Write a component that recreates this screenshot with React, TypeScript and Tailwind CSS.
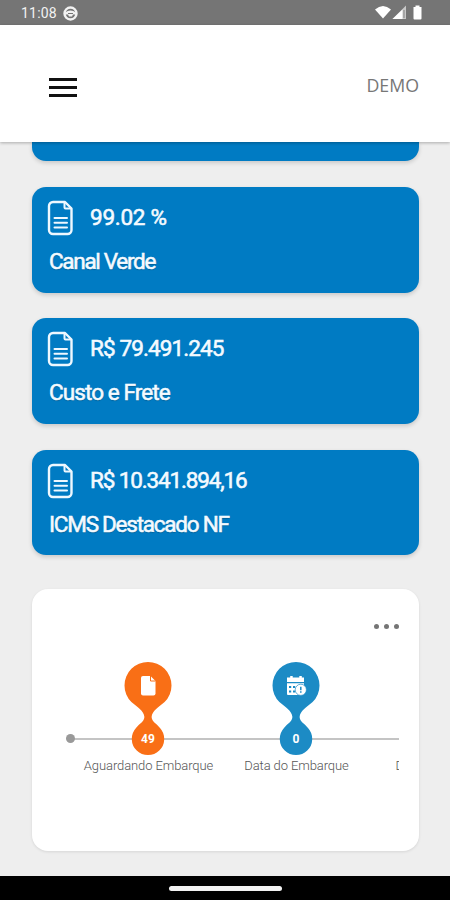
const FONT = "font-['Roboto','Liberation_Sans',sans-serif]";

function FileIcon() {
  return (
    <svg width="26" height="36" viewBox="0 0 26 36" fill="none" stroke="#eef8ff" strokeWidth="2.4" strokeLinejoin="round" strokeLinecap="round" className="-ml-px mr-px shrink-0">
      <path d="M6 2h12l6.500 6.500V30a4 4 0 0 1-4 4H6a4 4 0 0 1-4-4V6a4 4 0 0 1 4-4Z" />
      <path d="M17.500 2.500V7.500a1 1 0 0 0 1 1h5.500" strokeWidth="2" />
      <path d="M7.500 18h12.500M7.500 22.800h12.500M7.500 27.600h12.500" strokeWidth="2" />
    </svg>
  );
}

type StatProps = { value: string; label: string; valueClass: string; labelClass: string };

function StatCard({ value, label, valueClass, labelClass }: StatProps) {
  return (
    <section className="flex h-[105.5px] shrink-0 flex-col rounded-[14px] bg-[#007bc3] pl-4 pt-[13px] text-[22.5px] text-[#f4faff] shadow-[0_2px_4px_rgba(0,0,0,0.16)]">
      <div className="flex h-9 items-center gap-[16px]">
        <FileIcon />
        <span className={`-mt-[2px] whitespace-nowrap leading-[30px] [-webkit-text-stroke:0.55px_#f4faff] ${valueClass}`}>{value}</span>
      </div>
      <span className={`mt-[10px] whitespace-nowrap pl-px leading-[30px] [-webkit-text-stroke:0.55px_#f4faff] [text-shadow:0_1px_1px_rgba(0,0,0,0.25)] ${labelClass}`}>{label}</span>
    </section>
  );
}

function Pin({ color, count, kind }: { color: string; count: string; kind: "file" | "calendar" }) {
  return (
    <svg width="50" height="96" viewBox="0 0 50 96">
      <path
        fill={color}
        d="M41.600 41.100A23.500 23.500 0 1 0 8.400 41.100C14 46 21 50 21.400 56C21 61 16.500 62.500 13 67A16.200 16.200 0 1 0 37 67C33.500 62.500 29 61 28.600 56C29 50 36 46 41.600 41.100Z"
      />
      {kind === "file" ? (
        <>
          <path fill="#fff" d="M20 15h7.500l5 5v12.500a2 2 0 0 1-2 2H20a2 2 0 0 1-2-2V17a2 2 0 0 1 2-2Z" />
          <path d="M27.500 15v5h5" fill="none" stroke={color} strokeWidth="1" />
        </>
      ) : (
        <>
          <path fill="#fff" d="M18 16.500h1.200V15h2.500v1.500h6.600V15h2.500v1.500H33V21H16v-4.500h2Z" />
          <path fill="#fff" d="M16 22.300h17V34H17a1 1 0 0 1-1-1Z" />
          <path d="M18 25h2.200v2H18zM22 25h2.200v2H22zM18 29.500h2.200v2H18zM22 29.500h2.200v2H22z" fill={color} />
          <circle cx="29.800" cy="28.800" r="5.600" fill="#fff" stroke={color} strokeWidth=".7" />
          <path d="M29.800 25.800v3.500M29.800 30.300v1.500" stroke={color} strokeWidth="1.500" />
        </>
      )}
      <text x="25" y="82" textAnchor="middle" fill="#fff" fontFamily="Roboto, sans-serif" fontWeight="700" fontSize="12">{count}</text>
    </svg>
  );
}

export default function App() {
  return (
    <div className={`flex h-[900px] w-[450px] flex-col overflow-hidden bg-[#eeeeee] ${FONT}`}>
      <div className="flex h-[25px] shrink-0 items-center bg-[#757575] pl-[21px] pr-[27px] text-white">
        <span className="pt-px text-[14px] leading-none tracking-[0.2px] text-[#f2f2f2]">11:08</span>
        <svg className="ml-[6px] mt-px" width="15" height="15" viewBox="0 0 15 15">
          <circle cx="7.500" cy="7.500" r="6" fill="none" stroke="#f2f2f2" strokeWidth="2.400" />
          <path d="M2 6.500Q7.500 2.500 13 6.500V8.500H10L9 10.500h-3L5 8.500H2Z" fill="#f2f2f2" />
          <path d="M5 7.500h5" stroke="#757575" strokeWidth="1" />
        </svg>
        <svg className="ml-auto mt-px" width="48" height="16" viewBox="0 0 48 16">
          <path d="M0 4.500Q8 -2.500 16 4.500L8 13.500Z" fill="#fff" />
          <path d="M31 .5v13.500H17.500Z" fill="#c8c8c8" />
          <path d="M27.500 4.400V14h-10Z" fill="#fff" />
          <path d="M29 5v8" stroke="#858585" strokeWidth="1" />
          <path d="M40.500 0.500h4v1.500h2V13.500a1 1 0 0 1-1 1h-6a1 1 0 0 1-1-1V2h2Z" fill="#fff" />
        </svg>
      </div>

      <header className="relative z-10 flex h-[117px] shrink-0 items-center justify-between bg-white pl-[49px] pr-[31px] pt-[7px] shadow-[0_1px_3px_rgba(0,0,0,0.28)]">
        <button aria-label="Menu" className="flex w-7 flex-col gap-[5px]">
          <span className="h-[3px] bg-[#111111]" />
          <span className="h-[3px] bg-[#111111]" />
          <span className="h-[3px] bg-[#111111]" />
        </button>
        <span className="-mt-[5px] font-['Open_Sans','Noto_Sans',sans-serif] text-[17.800px] leading-6 text-[#777777]">DEMO</span>
      </header>

      <main className="flex min-h-0 flex-1 flex-col overflow-hidden px-8 pr-[31px]">
        <div className="h-[19px] shrink-0 rounded-b-[14px] bg-[#007bc3] shadow-[0_2px_4px_rgba(0,0,0,0.16)]" />
        <div className="mt-[26px] flex flex-col gap-[25.800px]">
          <StatCard value="99.02 %" label="Canal Verde" valueClass="tracking-[-0.25px]" labelClass="tracking-[-1.3px]" />
          <StatCard value="R$ 79.491.245" label="Custo e Frete" valueClass="tracking-[-0.9px]" labelClass="tracking-[-0.9px]" />
          <StatCard value="R$ 10.341.894,16" label="ICMS Destacado NF" valueClass="tracking-[-1.15px]" labelClass="tracking-[-1.25px]" />
        </div>

        <section className="mt-[34px] flex h-[262px] shrink-0 flex-col rounded-[16px] bg-white shadow-[0_1px_3px_rgba(0,0,0,0.1)]">
          <div className="flex justify-end gap-[5px] pr-[20.500px] pt-[35px]">
            <i className="size-[5px] rounded-full bg-[#757575]" />
            <i className="size-[5px] rounded-full bg-[#757575]" />
            <i className="size-[5px] rounded-full bg-[#757575]" />
          </div>
          <div className="relative ml-[33.500px] mr-[20.500px] mt-[32px] h-[120px] overflow-hidden">
            <div className="absolute left-1 right-0 top-[76.500px] h-[2px] bg-[#c4c4c4]" />
            <div className="absolute left-0 top-[73px] size-[9px] rounded-full bg-[#999999]" />
            <div className="flex text-[13px] font-light leading-[18px] text-[#555555]">
              <div className="flex w-[148px] shrink-0 translate-x-[8px] flex-col items-center">
                <Pin color="#f96f16" count="49" kind="file" />
                <span className="translate-x-px whitespace-nowrap tracking-[-0.100px]">Aguardando Embarque</span>
              </div>
              <div className="flex w-[148px] shrink-0 translate-x-[8px] flex-col items-center">
                <Pin color="#1c8bc5" count="0" kind="calendar" />
                <span className="translate-x-px whitespace-nowrap tracking-[-0.1px]">Data do Embarque</span>
              </div>
              <span className="shrink-0 translate-x-[34px] pt-[96px]">D</span>
            </div>
          </div>
        </section>
      </main>

      <div className="flex h-6 shrink-0 items-center justify-center bg-black">
        <div className="h-[5px] w-[113px] rounded-full bg-[#f2f2f2]" />
      </div>
    </div>
  );
}
